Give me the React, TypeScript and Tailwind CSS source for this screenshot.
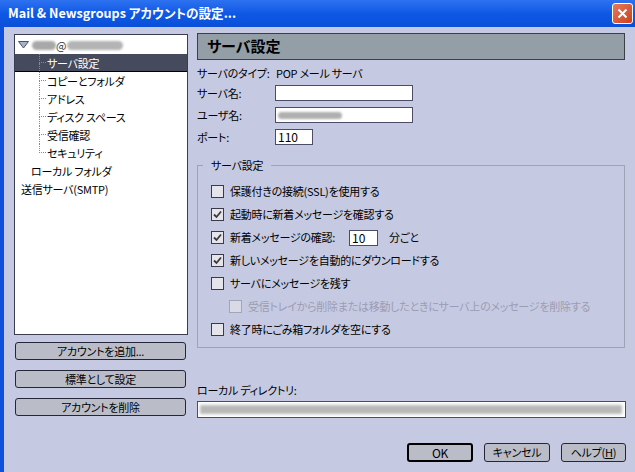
import React from 'react';

const FONT = "font-['Noto_Sans_CJK_JP','Noto_Sans_CJK_JP',sans-serif] [font-feature-settings:'palt']";

function CheckBox({ checked = false, disabled = false }: { checked?: boolean; disabled?: boolean }) {
  return (
    <div
      className={`w-[13px] h-[13px] shrink-0 border flex items-center justify-center ${
        disabled ? 'border-[#a4a4b8] bg-[#d8dae6]' : 'border-[#3a3a4c] bg-[#e4e4ea]'
      }`}
    >
      {checked && (
        <svg width="9" height="9" viewBox="0 0 9 9">
          <path d="M1 4.5 L3.5 7 L8 1.5" fill="none" stroke="#3a3a3a" strokeWidth="1.8" />
        </svg>
      )}
    </div>
  );
}

function DlgButton({ children, wide = false, isDefault = false, className = '' }: { children: React.ReactNode; wide?: boolean; isDefault?: boolean; className?: string }) {
  return (
    <div
      className={`h-[18px] flex items-center justify-center rounded-[3px] bg-[#babcc8] leading-none whitespace-nowrap ${
        isDefault ? 'border-2 border-black' : 'border border-[#26263a]'
      } ${wide ? 'w-full' : ''} ${className}`}
    >
      {children}
    </div>
  );
}

function TreeChild({ label, selected = false, last = false }: { label: string; selected?: boolean; last?: boolean }) {
  return (
    <div className={`h-[18px] flex ${selected ? 'bg-[#454b5c] text-white border-b border-black' : ''}`}>
      <div className="ml-[24px] w-[7px] flex flex-col">
        <div className="h-[9px] border-l border-b border-dotted border-[#8a8a8a]" />
        <div className={`flex-1 ${last ? '' : 'border-l border-dotted border-[#8a8a8a]'}`} />
      </div>
      <span className="pl-[1px] leading-[18px] whitespace-nowrap">{label}</span>
    </div>
  );
}

function CheckRow({ label, checked = false, disabled = false, indent = false, children }: { label: string; checked?: boolean; disabled?: boolean; indent?: boolean; children?: React.ReactNode }) {
  return (
    <div className={`h-[23px] flex items-center ${indent ? 'pl-[18px]' : ''}`}>
      <CheckBox checked={checked} disabled={disabled} />
      <span className={`ml-[6px] whitespace-nowrap ${disabled ? 'text-[#9c9cb2]' : ''}`}>{label}</span>
      {children}
    </div>
  );
}

export default function App() {
  return (
    <div className={`w-[635px] h-[472px] overflow-hidden flex flex-col bg-[#c5cae2] text-[11px] tracking-[-0.25px] text-black ${FONT}`}>
      {/* title bar */}
      <div className="h-[27px] shrink-0 flex items-center bg-gradient-to-b from-[#2d72f0] via-[#0f58e6] to-[#0a4fd8]">
        <span className="ml-[8px] text-white font-bold text-[12.6px] tracking-normal whitespace-nowrap">
          Mail &amp; Newsgroups アカウントの設定...
        </span>
        <div className="ml-auto mr-[2px] w-[21px] h-[21px] rounded-[3px] border border-white bg-gradient-to-br from-[#e8795a] to-[#c8401c] flex items-center justify-center">
          <svg width="11" height="11" viewBox="0 0 11 11">
            <path d="M1.5 1.5 L9.5 9.5 M9.5 1.5 L1.5 9.5" stroke="white" strokeWidth="2" />
          </svg>
        </div>
      </div>

      <div className="flex-1 flex border-l-4 border-[#0c50dc]">
        {/* left column */}
        <div className="ml-[10px] mt-[7px] w-[174px] flex flex-col">
          <div className="h-[301px] bg-white border border-[#3c3c50] pt-[1px]">
            <div className="h-[18px] flex items-center pl-[3px]">
              <svg width="11" height="8" viewBox="0 0 11 8" className="shrink-0">
                <path d="M0.5 0.5 L10.5 0.5 L5.5 7 Z" fill="#a9b3c6" stroke="#4a5468" />
              </svg>
              <span className="ml-[3px] w-[24px] h-[9px] rounded-full bg-[#a8a8a8] blur-[1px]" />
              <span className="text-[#333]">@</span>
              <span className="ml-[1px] w-[56px] h-[9px] rounded-full bg-[#b4b4b4] blur-[1px]" />
            </div>
            <TreeChild label="サーバ設定" selected />
            <TreeChild label="コピーとフォルダ" />
            <TreeChild label="アドレス" />
            <TreeChild label="ディスク スペース" />
            <TreeChild label="受信確認" />
            <TreeChild label="セキュリティ" last />
            <div className="h-[18px] leading-[18px] pl-[16px] whitespace-nowrap">ローカル フォルダ</div>
            <div className="h-[18px] leading-[18px] pl-[6px] whitespace-nowrap">送信サーバ(SMTP)</div>
          </div>
          <div className="mt-[7px] flex flex-col gap-[10px] pl-[1px] pr-[2px]">
            <DlgButton wide>アカウントを追加...</DlgButton>
            <DlgButton wide>標準として設定</DlgButton>
            <DlgButton wide>アカウントを削除</DlgButton>
          </div>
        </div>

        {/* right column */}
        <div className="ml-[9px] mt-[6px] w-[429px] flex flex-col">
          <div className="h-[27px] w-[428px] bg-[#939ea6] border border-[#3a4048] flex items-center px-[9px]">
            <span className="text-[15px] font-bold tracking-normal">サーバ設定</span>
          </div>

          <div className="mt-[5px] h-[16px] flex items-center whitespace-nowrap">
            <span className="w-[79px] shrink-0">サーバのタイプ:</span>
            <span>POP メール サーバ</span>
          </div>
          <div className="mt-[4px] h-[16px] flex items-center">
            <span className="w-[78px] shrink-0">サーバ名:</span>
            <div className="w-[138px] h-[16px] bg-white border border-[#4c4c66]" />
          </div>
          <div className="mt-[6px] h-[16px] flex items-center">
            <span className="w-[78px] shrink-0">ユーザ名:</span>
            <div className="w-[138px] h-[16px] bg-white border border-[#4c4c66] flex items-center pl-[2px]">
              <span className="w-[64px] h-[7px] rounded-full bg-[#b0b0b0] blur-[1px]" />
            </div>
          </div>
          <div className="mt-[6px] h-[16px] flex items-center">
            <span className="w-[78px] shrink-0">ポート:</span>
            <div className="w-[38px] h-[16px] bg-white border border-[#4c4c66] flex items-center pl-[2px] leading-none text-[12px] tracking-normal">110</div>
          </div>

          <fieldset className="mt-[12px] w-[428px] border border-[#a0a2b6] pl-[13px] pb-[6px]">
            <legend className="ml-[-8px] px-[8px] leading-[16px]">サーバ設定</legend>
            <div className="mt-[7px] flex flex-col">
              <CheckRow label="保護付きの接続(SSL)を使用する" />
              <CheckRow label="起動時に新着メッセージを確認する" checked />
              <CheckRow label="新着メッセージの確認:" checked>
                <div className="ml-[14px] w-[29px] h-[16px] bg-white border border-[#4c4c66] flex items-center pl-[2px] leading-none text-[12px] tracking-normal">10</div>
                <span className="ml-[11px]">分ごと</span>
              </CheckRow>
              <CheckRow label="新しいメッセージを自動的にダウンロードする" checked />
              <CheckRow label="サーバにメッセージを残す" />
              <CheckRow label="受信トレイから削除または移動したときにサーバ上のメッセージを削除する" disabled indent />
              <CheckRow label="終了時にごみ箱フォルダを空にする" />
            </div>
          </fieldset>

          <div className="mt-[34px] h-[16px] flex items-center">ローカル ディレクトリ:</div>
          <div className="mt-[3px] h-[17px] w-[429px] bg-white border border-[#4c4c66] flex items-center px-[2px]">
            <span className="w-[422px] h-[9px] bg-[#b8b8b8] blur-[1.5px]" />
          </div>

          <div className="mt-[25px] flex justify-end gap-[11px]">
            <DlgButton isDefault className="w-[66px] h-[19px] text-[12px]">OK</DlgButton>
            <DlgButton className="w-[66px] h-[19px]">キャンセル</DlgButton>
            <DlgButton className="w-[65px] h-[19px]">
              ヘルプ(<span className="underline">H</span>)
            </DlgButton>
          </div>
        </div>
      </div>
    </div>
  );
}
